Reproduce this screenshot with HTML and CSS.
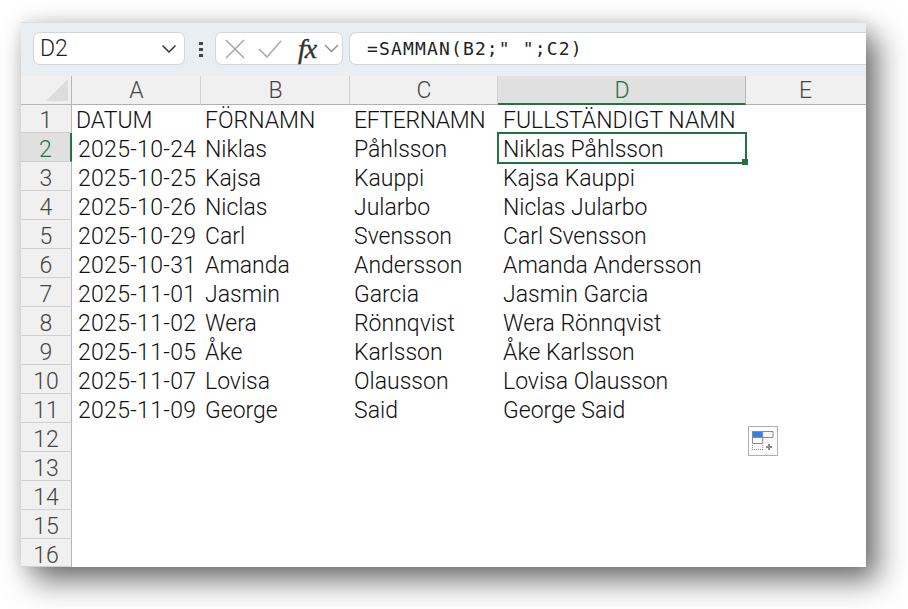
FILE: index.html
```html
<!DOCTYPE html>
<html lang="sv">
<head>
<meta charset="utf-8">
<title>Excel</title>
<link rel="stylesheet" href="styles.css">
</head>
<body>
<div class="window">
  <div class="toolbar">
    <div class="box namebox"><span>D2</span>
      <svg class="chev" width="16" height="10" viewBox="0 0 16 10"><path d="M1.5 1.5 8 8l6.500-6.500" fill="none" stroke="#333" stroke-width="1.500"/></svg>
    </div>
    <svg class="dots" width="4" height="16" viewBox="0 0 4 16"><path d="M0 1h4v3H0zM0 7h4v3H0zM0 13h4v3H0z" fill="#444"/></svg>
    <div class="box fnbox">
      <svg width="20" height="20" viewBox="0 0 20 20"><path d="M1 1l18 18M19 1 1 19" fill="none" stroke="#a6a6a6" stroke-width="1.500"/></svg>
      <svg class="check" width="24" height="18" viewBox="0 0 24 18"><path d="M1 9l8 8L23 1" fill="none" stroke="#a6a6a6" stroke-width="1.500"/></svg>
      <span class="fx">fx</span>
      <svg class="chev2" width="15" height="9" viewBox="0 0 15 9"><path d="M1 1l6.500 6.500L14 1" fill="none" stroke="#8a8a8a" stroke-width="1.300"/></svg>
    </div>
    <div class="formula">=SAMMAN(B2;" ";C2)</div>
  </div>
  <div class="sheet">
    <div class="corner"><svg width="22" height="22" viewBox="0 0 22 22"><path d="M22 0v22H0z" fill="#dcdcdc"/></svg></div>
    <div class="ch">A</div><div class="ch">B</div><div class="ch">C</div><div class="ch sel">D</div><div class="ch last">E</div>

    <div class="rh r1">1</div><div class="c r1">DATUM</div><div class="c r1">FÖRNAMN</div><div class="c r1 tight">EFTERNAMN</div><div class="c w r1">FULLSTÄNDIGT NAMN</div><div class="c r1"></div>
    <div class="rh rsel">2</div><div class="c d">2025-10-24</div><div class="c">Niklas</div><div class="c">Påhlsson</div><div class="c w active">Niklas Påhlsson</div><div class="c"></div>
    <div class="rh">3</div><div class="c d">2025-10-25</div><div class="c">Kajsa</div><div class="c">Kauppi</div><div class="c w">Kajsa Kauppi</div><div class="c"></div>
    <div class="rh">4</div><div class="c d">2025-10-26</div><div class="c">Niclas</div><div class="c">Jularbo</div><div class="c w">Niclas Jularbo</div><div class="c"></div>
    <div class="rh">5</div><div class="c d">2025-10-29</div><div class="c">Carl</div><div class="c">Svensson</div><div class="c w">Carl Svensson</div><div class="c"></div>
    <div class="rh">6</div><div class="c d">2025-10-31</div><div class="c">Amanda</div><div class="c">Andersson</div><div class="c w">Amanda Andersson</div><div class="c"></div>
    <div class="rh">7</div><div class="c d">2025-11-01</div><div class="c">Jasmin</div><div class="c">Garcia</div><div class="c w">Jasmin Garcia</div><div class="c"></div>
    <div class="rh">8</div><div class="c d">2025-11-02</div><div class="c">Wera</div><div class="c">Rönnqvist</div><div class="c w">Wera Rönnqvist</div><div class="c"></div>
    <div class="rh">9</div><div class="c d">2025-11-05</div><div class="c">Åke</div><div class="c">Karlsson</div><div class="c w">Åke Karlsson</div><div class="c"></div>
    <div class="rh">10</div><div class="c d">2025-11-07</div><div class="c">Lovisa</div><div class="c">Olausson</div><div class="c w">Lovisa Olausson</div><div class="c"></div>
    <div class="rh">11</div><div class="c d">2025-11-09</div><div class="c">George</div><div class="c">Said</div><div class="c w">George Said</div><div class="c"></div>
    <div class="rh">12</div><div class="c"></div><div class="c"></div><div class="c"></div><div class="c"></div><div class="c"></div>
    <div class="rh">13</div><div class="c"></div><div class="c"></div><div class="c"></div><div class="c"></div><div class="c"></div>
    <div class="rh">14</div><div class="c"></div><div class="c"></div><div class="c"></div><div class="c"></div><div class="c"></div>
    <div class="rh">15</div><div class="c"></div><div class="c"></div><div class="c"></div><div class="c"></div><div class="c"></div>
    <div class="rh">16</div><div class="c"></div><div class="c"></div><div class="c"></div><div class="c"></div><div class="c"></div>

    <div class="paste">
      <svg width="22" height="20" viewBox="0 0 22 20">
        <path d="M.5.5h10.200v6H.5z" fill="#2f80ff"/>
        <path d="M.5.5h20.500v6H.500zM10.700.5v6M.5.5v12h10.200v-6" fill="none" stroke="#8c8c8c"/>
        <path d="M.5 14v5M10.700 14v5" fill="none" stroke="#8c8c8c" stroke-dasharray="1 1"/>
        <path d="M0 18.500h11" fill="none" stroke="#8c8c8c" stroke-dasharray="1 1"/>
        <path d="M14 16h6M17 13v6" fill="none" stroke="#8c8c8c" stroke-width="2"/>
      </svg>
    </div>
  </div>
</div>
</body>
</html>
```

FILE: styles.css
```css
html, body {
  margin: 0;
  height: 100%;
  background: #fff;
  overflow: hidden;
}
body {
  padding: 22px 0 0 21px;
  box-sizing: border-box;
}
.window {
  width: 845px;
  height: 545px;
  overflow: hidden;
  background: #fff;
  box-shadow: 12px 14px 28px rgba(0, 0, 0, .55), 0 0 16px rgba(0, 0, 0, .12);
}
.toolbar {
  height: 54px;
  box-sizing: border-box;
  background: #e8eef1;
  border-top: 1px solid #d9dfe2;
  padding: 9px 0 11px 12px;
  display: flex;
  align-items: stretch;
}
.box {
  background: #fff;
  border: 1px solid #d2d6d8;
  border-radius: 7px;
  box-sizing: border-box;
  display: flex;
  align-items: center;
}
.namebox {
  width: 152px;
  padding: 0 7px 0 6px;
  justify-content: space-between;
  font: 300 23px "Roboto", sans-serif;
  color: #222;
}
.dots {
  align-self: center;
  margin: 0 12px 0 14px;
}
.fnbox {
  width: 128px;
  padding-left: 9px;
}
.check {
  margin-left: 13px;
}
.fx {
  font: italic 28px "Liberation Serif", serif;
  -webkit-text-stroke: .4px #333;
  color: #333;
  margin-left: 16px;
  line-height: 24px;
  letter-spacing: -1px;
}
.chev2 {
  margin-left: 8px;
}
.formula {
  flex: 1;
  margin-left: 6px;
  background: #fff;
  border: 1px solid #d2d6d8;
  border-right: 0;
  border-radius: 7px 0 0 7px;
  box-sizing: border-box;
  padding: 0 0 0 17px;
  display: flex;
  align-items: center;
  font: 18px "DejaVu Sans Mono", monospace;
  letter-spacing: 1.15px;
  color: #222;
  white-space: pre;
}
.sheet {
  position: relative;
  display: grid;
  grid-template-columns: 51px 129px 149px 148px 248px 120px;
  grid-template-rows: 29px 28px repeat(14, 29px) 28px;
  font: 300 23px/29px "Roboto", sans-serif;
  color: #111;
}
.corner {
  background: #f0f0f0;
  border-right: 1px solid #b5b5b5;
  border-bottom: 1px solid #b5b5b5;
  box-sizing: border-box;
  display: flex;
  align-items: flex-end;
  justify-content: flex-end;
  padding: 0 3px 3px 0;
}
.ch {
  background: #f0f0f0;
  border-right: 1px solid #d0d0d0;
  border-bottom: 1px solid #b0b0b0;
  box-sizing: border-box;
  text-align: center;
  color: #444;
  line-height: 30px;
  padding-left: 1px;
}
.ch.sel {
  background: #e0e0e0;
  color: #217346;
  border-right-color: #b5b5b5;
  border-bottom: 2px solid #217346;
}
.ch.last {
  border-right: 0;
  padding: 0 1px 0 0;
}
.rh {
  background: #f0f0f0;
  border-right: 1px solid #b5b5b5;
  border-bottom: 1px solid #d0d0d0;
  box-sizing: border-box;
  text-align: center;
  color: #444;
  line-height: 23px;
  padding-top: 5px;
}
.rh.rsel {
  background: #e0e0e0;
  color: #217346;
  border-right: 2px solid #217346;
}
.c {
  padding: 2px 0 0 4px;
  white-space: nowrap;
  box-sizing: border-box;
}
.c.w {
  padding-left: 5px;
}
.c.d {
  padding-left: 6px;
  letter-spacing: .3px;
}
.c.tight {
  letter-spacing: -.4px;
}
.rh.r1 {
  padding-top: 4px;
}
.c.r1 {
  padding-top: 1px;
}
.active {
  position: relative;
}
.active::before {
  content: "";
  position: absolute;
  left: -1px;
  top: -1px;
  right: -1px;
  bottom: -2px;
  border: 2px solid #217346;
}
.active::after {
  content: "";
  position: absolute;
  right: -2px;
  bottom: -3px;
  width: 6px;
  height: 6px;
  background: #217346;
}
.paste {
  position: absolute;
  left: 727px;
  top: 350px;
  width: 30px;
  height: 30px;
  box-sizing: border-box;
  border: 1px solid #b0b0b0;
  background: #fcfcfc;
  padding: 4px 3px;
}
.paste svg {
  display: block;
}
```
